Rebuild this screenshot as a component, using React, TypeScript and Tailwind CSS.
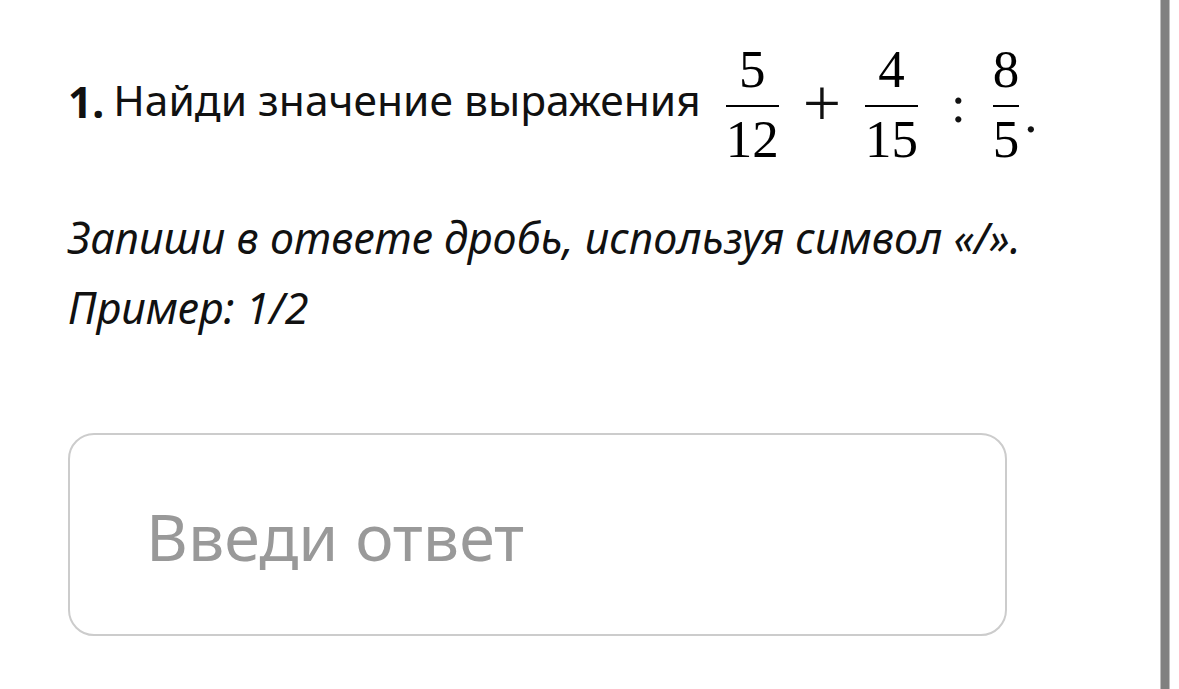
const sans = { fontFamily: '"Noto Sans", "Open Sans", sans-serif' };
const serif = { fontFamily: '"Liberation Serif", "DejaVu Serif", serif' };

function Frac({ top, bottom }: { top: string; bottom: string }) {
  return (
    <span className="inline-flex flex-col items-center px-[3px] text-[53px] leading-[53px] text-black" style={serif}>
      <span className="mb-[9px]">{top}</span>
      <span className="w-full border-t-[2px] border-black" />
      <span className="mt-[6px]">{bottom}</span>
    </span>
  );
}

export default function App() {
  return (
    <div className="flex h-[689px] w-[1179px] overflow-hidden bg-white" style={sans}>
      <div className="flex-1 pl-[68px] pt-[37px]">
        {/* Условие */}
        <div className="flex items-center text-[42.5px] text-[#111]">
          <span className="font-bold">1.</span>
          <span className="ml-[9px] mb-[4px]">Найди значение выражения</span>
          <span className="ml-[22px] mt-[6px] flex items-center" style={serif}>
            <Frac top="5" bottom="12" />
            <span className="mx-[21px] mb-[4px] text-[68px] leading-none">+</span>
            <Frac top="4" bottom="15" />
            <span className="ml-[30px] mr-[24px] text-[53px] leading-none">:</span>
            <Frac top="8" bottom="5" />
            <span className="ml-[2px] mt-[20px] text-[53px] leading-none">.</span>
          </span>
        </div>

        {/* Подсказка */}
        <div className="mt-[37px] text-[43px] italic leading-[70px] text-[#111]">
          <p>Запиши в ответе дробь, используя символ «/».</p>
          <p>Пример: 1/2</p>
        </div>

        {/* Поле ввода */}
        <div className="mt-[90px] flex h-[203px] w-[939px] items-center rounded-[26px] border-2 border-[#cccccc] pl-[76px]">
          <span className="mt-[4px] text-[64.5px] text-[#999999]">Введи ответ</span>
        </div>
      </div>

      <div className="mr-[9px] w-[10px] border-x border-[#bdbdbd] bg-[#808080]" />
    </div>
  );
}
